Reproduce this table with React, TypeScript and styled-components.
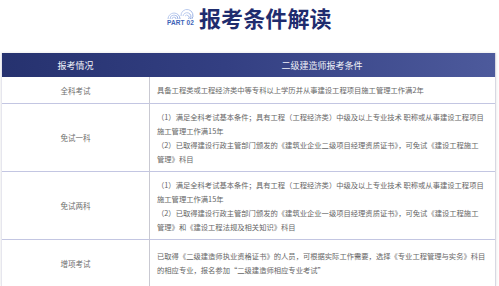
import React from "react";
import styled, { createGlobalStyle } from "styled-components";

const Global = createGlobalStyle`
  html, body { margin: 0; padding: 0; background: #ffffff; }
  body { font-family: "Noto Sans CJK SC", "Noto Sans", sans-serif; }
`;

const Page = styled.div`
  width: 499px;
  height: 286px;
  overflow: hidden;
  background: #fff;
  display: flex;
  flex-direction: column;
`;

const TitleBar = styled.div`
  height: 53px;
  box-sizing: border-box;
  padding: 3px 0 0 167px;
  display: flex;
  align-items: flex-start;
  gap: 4px;
`;

const Badge = styled.div`
  display: flex;
  flex-direction: column;
  align-items: flex-start;
  padding-top: 3px;
`;

const PartText = styled.span`
  font-family: "Liberation Sans", Arial, sans-serif;
  font-size: 6.5px;
  font-weight: 700;
  color: #3d63b8;
  line-height: 8px;
  letter-spacing: 0.1px;
`;

const Title = styled.h1`
  margin: 0;
  font-size: 22px;
  line-height: 28px;
  font-weight: 700;
  color: #1f2c6e;
  letter-spacing: 0.1px;
`;

const Table = styled.div`
  margin-left: 1px;
  width: 495px;
  display: grid;
  grid-template-columns: 148px 1fr;
  box-shadow: 0 0 3px rgba(0, 0, 0, 0.12);
  border-left: 1px solid #e6e6ee;
  border-right: 1px solid #d8d8e2;
  box-sizing: border-box;
`;

const HeadRow = styled.div`
  grid-column: 1 / -1;
  display: grid;
  grid-template-columns: 147px 1fr;
  height: 24px;
  background: linear-gradient(90deg, #26326f 0%, #333f82 45%, #4d5a9c 100%);
`;

const HeadCell = styled.div`
  display: flex;
  align-items: center;
  justify-content: center;
  color: #f2f3fa;
  font-size: 9px;
`;

const Label = styled.div<{ $h: number }>`
  height: ${(p) => p.$h}px;
  box-sizing: border-box;
  border-right: 1px solid #c9c9d2;
  border-bottom: 1px solid #c3c6e2;
  display: flex;
  align-items: center;
  justify-content: center;
  color: #6e6e6e;
  font-size: 7.5px;
`;

const Body = styled.div<{ $h: number }>`
  height: ${(p) => p.$h}px;
  box-sizing: border-box;
  border-bottom: 1px solid #c3c6e2;
  display: flex;
  flex-direction: column;
  justify-content: center;
  padding-left: 7px;
  color: #666;
  font-size: 7.3px;
  line-height: 14px;
  white-space: nowrap;
`;

const LastLabel = styled(Label)`
  border-bottom: none;
`;
const LastBody = styled(Body)`
  border-bottom: none;
`;

const Logo = () => (
  <svg width="28" height="13" viewBox="0 0 28 13">
    <defs>
      <linearGradient id="lg" x1="0" y1="0" x2="1" y2="1">
        <stop offset="0" stopColor="#c9d6f2" />
        <stop offset="1" stopColor="#8ea8e0" />
      </linearGradient>
    </defs>
    {[2, 4, 6].map((r) => (
      <path key={"a" + r} d={`M ${7 - r} 13 A ${r} ${r} 0 0 1 ${7 + r} 13`} fill="none" stroke="url(#lg)" strokeWidth="1" />
    ))}
    {[2, 4, 6].map((r) => (
      <path key={"b" + r} d={`M ${20 - r} 10 A ${r} ${r} 0 1 1 ${20 + r * 0.8} 13`} fill="none" stroke="url(#lg)" strokeWidth="1" />
    ))}
  </svg>
);

const rows: { label: string; h: number; lines: string[] }[] = [
  {
    label: "全科考试",
    h: 27,
    lines: ["具备工程类或工程经济类中等专科以上学历并从事建设工程项目施工管理工作满2年"],
  },
  {
    label: "免试一科",
    h: 68,
    lines: [
      "（1）满足全科考试基本条件；具有工程（工程经济类）中级及以上专业技术 职称或从事建设工程项目",
      "施工管理工作满15年",
      "（2）已取得建设行政主管部门颁发的《建筑业企业二级项目经理资质证书》，可免试《建设工程施工",
      "管理》科目",
    ],
  },
  {
    label: "免试两科",
    h: 68,
    lines: [
      "（1）满足全科考试基本条件；具有工程（工程经济类）中级及以上专业技术 职称或从事建设工程项目",
      "施工管理工作满15年",
      "（2）已取得建设行政主管部门颁发的《建筑业企业一级项目经理资质证书》，可免试《建设工程施工",
      "管理》和《建设工程法规及相关知识》科目",
    ],
  },
];

const last = {
  label: "增项考试",
  h: 46,
  lines: [
    "已取得《二级建造师执业资格证书》的人员，可根据实际工作需要，选择《专业工程管理与实务》科目",
    "的相应专业，报名参加“二级建造师相应专业考试”",
  ],
};

export default function App() {
  return (
    <Page>
      <Global />
      <TitleBar>
        <Badge>
          <Logo />
          <PartText>PART 02</PartText>
        </Badge>
        <Title>报考条件解读</Title>
      </TitleBar>
      <Table>
        <HeadRow>
          <HeadCell>报考情况</HeadCell>
          <HeadCell>二级建造师报考条件</HeadCell>
        </HeadRow>
        {rows.map((r) => (
          <React.Fragment key={r.label}>
            <Label $h={r.h}>{r.label}</Label>
            <Body $h={r.h}>
              {r.lines.map((l) => (
                <div key={l}>{l}</div>
              ))}
            </Body>
          </React.Fragment>
        ))}
        <LastLabel $h={last.h}>{last.label}</LastLabel>
        <LastBody $h={last.h}>
          {last.lines.map((l) => (
            <div key={l}>{l}</div>
          ))}
        </LastBody>
      </Table>
    </Page>
  );
}
